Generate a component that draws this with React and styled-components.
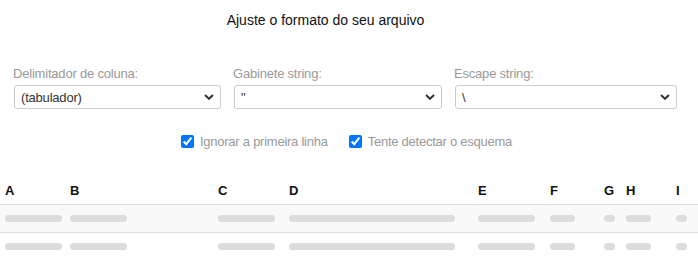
import styled, { createGlobalStyle } from "styled-components";

const GlobalStyle = createGlobalStyle`
  body {
    margin: 0;
    background: #fff;
    font-family: "Liberation Sans", Arial, sans-serif;
  }
`;

const Page = styled.div`
  width: 698px;
`;

const Title = styled.h1`
  margin: 0;
  padding: 12px 47px 0 0;
  font-size: 14px;
  line-height: 16px;
  font-weight: normal;
  color: #111;
  text-align: center;
`;

const Fields = styled.div`
  display: grid;
  grid-template-columns: 207px 208px 222px;
  column-gap: 13px;
  padding-left: 14px;
  margin-top: 38px;
`;

const Field = styled.div`
  display: flex;
  flex-direction: column;
`;

const Label = styled.label`
  font-size: 13px;
  line-height: 15px;
  letter-spacing: -0.2px;
  color: #999;
  margin-left: -1px;
  margin-bottom: 4px;
`;

const SelectBox = styled.div`
  box-sizing: border-box;
  height: 24px;
  display: flex;
  align-items: center;
  justify-content: space-between;
  padding: 0 6px 0 6px;
  border: 1px solid #ccc;
  border-radius: 3px;
  font-size: 13px;
  letter-spacing: -0.2px;
  color: #333;
  background: #fff;
`;

const Options = styled.div`
  display: flex;
  justify-content: center;
  gap: 21px;
  padding-right: 5px;
  margin-top: 25px;
`;

const Option = styled.label`
  display: flex;
  align-items: center;
  gap: 6px;
  font-size: 13px;
  line-height: 15px;
  letter-spacing: -0.25px;
  color: #999;
`;

const Check = styled.input`
  margin: 0;
  width: 13px;
  height: 13px;
`;

const Table = styled.div`
  margin-top: 27px;
`;

const Row = styled.div`
  display: grid;
  grid-template-columns: 65px 148px 71px 189px 72px 54px 22px 50px 1fr;
  height: ${(p) => (p.$head ? "28px" : "27px")};
  align-items: center;
  border-bottom: 1px solid #dedede;
  background: ${(p) => (p.$striped ? "#f9f9f9" : "#fff")};
`;

const HeadCell = styled.div`
  padding-left: 5px;
  font-size: 13px;
  font-weight: bold;
  color: #111;
`;

const Cell = styled.div`
  padding-left: 5px;
  display: flex;
`;

const Bar = styled.span`
  display: block;
  height: 7px;
  border-radius: 4px;
  background: #dcdcdc;
`;

const Chevron = () => (
  <svg width="10" height="6" viewBox="0 0 10 6">
    <path d="M1 1l4 3.8L9 1" fill="none" stroke="#333" strokeWidth="2" />
  </svg>
);

const columns = [
  { key: "A", bar: 57 },
  { key: "B", bar: 57 },
  { key: "C", bar: 57 },
  { key: "D", bar: 166 },
  { key: "E", bar: 57 },
  { key: "F", bar: 25 },
  { key: "G", bar: 11 },
  { key: "H", bar: 25 },
  { key: "I", bar: 11 },
];

const fields = [
  { label: "Delimitador de coluna:", value: "(tabulador)" },
  { label: "Gabinete string:", value: '"' },
  { label: "Escape string:", value: "\\" },
];

export default function App() {
  return (
    <Page>
      <GlobalStyle />
      <Title>Ajuste o formato do seu arquivo</Title>

      <Fields>
        {fields.map((f) => (
          <Field key={f.label}>
            <Label>{f.label}</Label>
            <SelectBox>
              <span>{f.value}</span>
              <Chevron />
            </SelectBox>
          </Field>
        ))}
      </Fields>

      <Options>
        <Option>
          <Check type="checkbox" defaultChecked />
          Ignorar a primeira linha
        </Option>
        <Option>
          <Check type="checkbox" defaultChecked />
          Tente detectar o esquema
        </Option>
      </Options>

      <Table>
        <Row $head>
          {columns.map((c) => (
            <HeadCell key={c.key}>{c.key}</HeadCell>
          ))}
        </Row>
        {[0, 1].map((r) => (
          <Row key={r} $striped={r === 0}>
            {columns.map((c) => (
              <Cell key={c.key}>
                <Bar style={{ width: c.bar }} />
              </Cell>
            ))}
          </Row>
        ))}
      </Table>
    </Page>
  );
}
